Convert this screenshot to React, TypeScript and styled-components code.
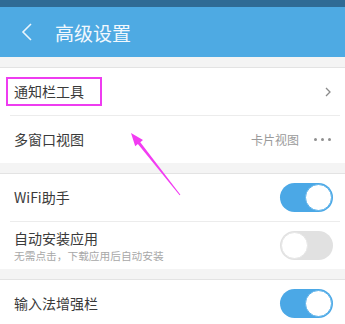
import styled, { createGlobalStyle } from 'styled-components';

type ToggleProps = { $on?: boolean };

export default function App() {
  return (
    <Page>
      <GlobalStyle />
      <StatusBar />
      <Header>
        <BackIcon viewBox="0 0 12 18">
          <path d="M10 1 L2 9 L10 17" />
        </BackIcon>
        <Title>高级设置</Title>
      </Header>
      <Gap />
      <Section>
        <Row>
          <Highlight>
            <Label>通知栏工具</Label>
          </Highlight>
          <Chevron viewBox="0 0 6 10">
            <path d="M1 1 L5 5 L1 9" />
          </Chevron>
        </Row>
        <Divider />
        <Row>
          <Label>多窗口视图</Label>
          <Right>
            <Value>卡片视图</Value>
            <Dots>
              <Dot />
              <Dot />
              <Dot />
            </Dots>
          </Right>
        </Row>
      </Section>
      <Gap />
      <Section>
        <Row>
          <Label>WiFi助手</Label>
          <Toggle $on>
            <Knob $on />
          </Toggle>
        </Row>
        <Divider />
        <Row>
          <TextBlock>
            <Label>自动安装应用</Label>
            <Sub>无需点击，下载应用后自动安装</Sub>
          </TextBlock>
          <Toggle>
            <Knob />
          </Toggle>
        </Row>
      </Section>
      <Gap />
      <Section>
        <Row>
          <Label>输入法增强栏</Label>
          <Toggle $on>
            <Knob $on />
          </Toggle>
        </Row>
      </Section>
      <Arrow viewBox="0 0 345 324">
        <polygon points="131,133 143,140.1 140.3,142.3 180.4,194.7 179.6,195.3 137.9,144.1 135.2,146.3" />
      </Arrow>
    </Page>
  );
}

const GlobalStyle = createGlobalStyle`
  body {
    margin: 0;
    background: #ffffff;
    font-family: "Noto Sans CJK SC", "Noto Sans", sans-serif;
  }
`;

const Page = styled.div`
  position: relative;
  width: 345px;
  height: 324px;
  overflow: hidden;
  background: #ffffff;
`;

const StatusBar = styled.div`
  height: 7px;
  background: #2f6b95;
`;

const Header = styled.div`
  height: 50px;
  background: #4eaae3;
  display: flex;
  align-items: center;
  padding-left: 21px;
  box-sizing: border-box;
`;

const BackIcon = styled.svg`
  width: 12px;
  height: 18px;
  fill: none;
  stroke: #eaf5fc;
  stroke-width: 1.6;
  margin-right: 22px;
`;

const Title = styled.span`
  color: #f2f8fd;
  font-size: 19px;
  letter-spacing: 0;
  line-height: 1;
`;

const Gap = styled.div`
  height: 10px;
  background: #f4f4f4;
  border-bottom: 1px solid #e3e3e3;
`;

const Section = styled.div`
  background: #ffffff;
  display: flex;
  flex-direction: column;
`;

const Row = styled.div`
  min-height: 47px;
  display: flex;
  align-items: center;
  justify-content: space-between;
  padding: 0 12px 0 14px;
  box-sizing: border-box;
`;

const Divider = styled.div`
  height: 1px;
  margin: 0 5px 0 10px;
  background: #ececec;
`;

const Highlight = styled.div`
  margin-left: -8px;
  width: 96px;
  height: 29px;
  box-sizing: border-box;
  border: 2px solid #ee3cf0;
  display: flex;
  align-items: center;
  padding-left: 6px;
`;

const Label = styled.span`
  font-size: 14px;
  color: #3a3a3a;
  line-height: 1.2;
`;

const TextBlock = styled.div`
  display: flex;
  flex-direction: column;
  gap: 4px;
  padding-top: 2px;
`;

const Sub = styled.span`
  font-size: 10.7px;
  color: #a8a8a8;
  line-height: 1.2;
`;

const Chevron = styled.svg`
  width: 6px;
  height: 10px;
  fill: none;
  stroke: #8a8a8a;
  stroke-width: 1.3;
  margin-right: 2px;
`;

const Right = styled.div`
  display: flex;
  align-items: center;
  gap: 15px;
`;

const Value = styled.span`
  font-size: 12px;
  color: #9a9a9a;
`;

const Dots = styled.div`
  display: flex;
  gap: 4px;
  margin-right: 2px;
`;

const Dot = styled.span`
  width: 3px;
  height: 3px;
  border-radius: 50%;
  background: #8f8f8f;
`;

const Toggle = styled.div<ToggleProps>`
  width: 53px;
  height: 29px;
  border-radius: 15px;
  background: ${(p) => (p.$on ? '#4ba8e6' : '#e1e1e1')};
  display: flex;
  align-items: center;
  justify-content: ${(p) => (p.$on ? 'flex-end' : 'flex-start')};
  padding: 1px;
  box-sizing: border-box;
`;

const Knob = styled.div<ToggleProps>`
  width: 27px;
  height: 27px;
  border-radius: 50%;
  background: #ffffff;
  box-sizing: border-box;
  border: 1px solid ${(p) => (p.$on ? '#5fb3ea' : '#e6e6e6')};
`;

const Arrow = styled.svg`
  position: absolute;
  left: 0;
  top: 0;
  width: 345px;
  height: 324px;
  pointer-events: none;
  fill: #f23cf2;
`;
